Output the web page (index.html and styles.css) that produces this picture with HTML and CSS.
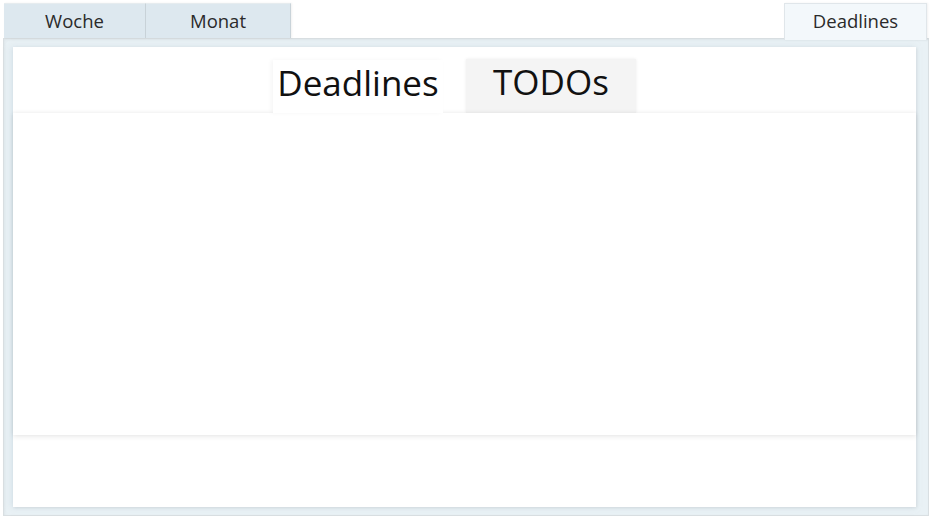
FILE: index.html
```html
<!DOCTYPE html>
<html>
<head>
<meta charset="utf-8">
<link rel="stylesheet" href="styles.css">
</head>
<body>
<div class="app">
  <div class="tabbar">
    <div class="tab">Woche</div>
    <div class="tab">Monat</div>
    <div class="spacer"></div>
    <div class="tab active">Deadlines</div>
  </div>
  <div class="frame">
    <div class="panel">
      <div class="subtabs">
        <div class="subtab current">Deadlines</div>
        <div class="subtab other">TODOs</div>
      </div>
      <div class="content"></div>
    </div>
  </div>
</div>
</body>
</html>
```
FILE: styles.css
```css
html, body {
  margin: 0;
  padding: 0;
  background: #ffffff;
  font-family: "Open Sans", "Noto Sans", sans-serif;
  color: #1a1a1a;
}
.app {
  width: 932px;
  height: 519px;
  padding: 3px 3px 0 3px;
  box-sizing: border-box;
}
.tabbar {
  display: flex;
  height: 35px;
  padding-left: 1px;
}
.tab {
  width: 142px;
  height: 35px;
  box-sizing: border-box;
  background: #dde8ef;
  border-right: 1px solid #c9d3d9;
  border-top: 1px solid #e6ecef;
  font-size: 18.5px;
  line-height: 34px;
  text-align: center;
  color: #2a2a2a;
  box-shadow: 1px 0 2px rgba(0,0,0,0.06);
}
.tab + .tab {
  width: 145px;
}
.spacer { flex: 1; }
.tab.active {
  width: 143px;
  height: 37px;
  background: #f3f8fb;
  border: 1px solid #e0e6ea;
  border-bottom: none;
  line-height: 33px;
  margin-right: 2px;
  position: relative;
  z-index: 1;
}
.frame {
  height: 478px;
  box-sizing: border-box;
  background: #e9f1f5;
  border: 1px solid #d9dfe2;
  padding: 8px 12px 8px 9px;
  box-shadow: inset 1px 1px 3px rgba(0,0,0,0.05);
}
.panel {
  height: 100%;
  background: #ffffff;
  box-shadow: 1px 1px 3px rgba(0,0,0,0.08), -2px 0 6px rgba(200,215,225,0.5);
  display: flex;
  flex-direction: column;
}
.subtabs {
  display: flex;
  gap: 23px;
  padding-left: 260px;
  padding-top: 12px;
  height: 66px;
  box-sizing: border-box;
  align-items: flex-end;
}
.subtab {
  width: 170px;
  font-size: 35px;
  text-align: center;
  color: #111;
  line-height: 46px;
}
.subtab.current {
  height: 53px;
  background: #ffffff;
  box-shadow: -2px 0 4px rgba(0,0,0,0.04);
  position: relative;
  z-index: 2;
}
.subtab.other {
  height: 54px;
  background: #f4f4f4;
  box-shadow: 0 0 3px rgba(0,0,0,0.08);
}
.content {
  height: 322px;
  background: #ffffff;
  box-shadow: 0 2px 5px rgba(0,0,0,0.08), 0 -1px 4px rgba(0,0,0,0.05);
  position: relative;
  z-index: 1;
}
```
